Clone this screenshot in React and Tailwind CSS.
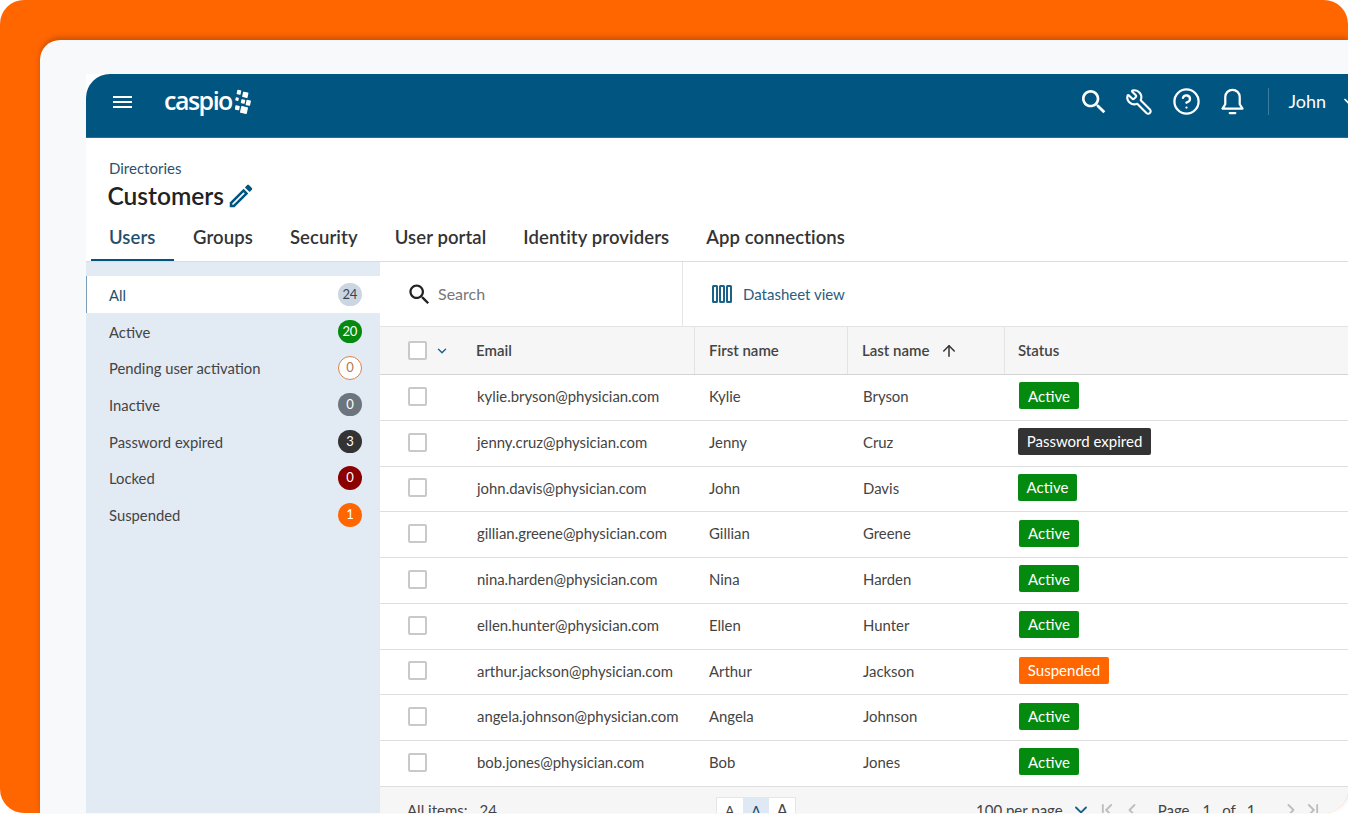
import { ArrowUp, ChevronDown, ChevronFirst, ChevronLast, ChevronLeft, ChevronRight, CircleHelp, Wrench } from 'lucide-react';

const filters = [
  { label: 'All', count: 24, badge: 'bg-[#ccd6e2] text-[#33475b]' },
  { label: 'Active', count: 20, badge: 'bg-[#048a0e] text-white' },
  { label: 'Pending user activation', count: 0, badge: 'border border-[#d9824a] bg-white text-[#b5774e]' },
  { label: 'Inactive', count: 0, badge: 'bg-[#6c757d] text-white' },
  { label: 'Password expired', count: 3, badge: 'bg-[#333333] text-white' },
  { label: 'Locked', count: 0, badge: 'bg-[#8b0000] text-white' },
  { label: 'Suspended', count: 1, badge: 'bg-[#ff6600] text-white' },
];

const users = [
  { email: 'kylie.bryson@physician.com', first: 'Kylie', last: 'Bryson', status: 'Active', badge: 'ml-px w-[60px] bg-[#048a0e]' },
  { email: 'jenny.cruz@physician.com', first: 'Jenny', last: 'Cruz', status: 'Password expired', badge: 'w-[133px] bg-[#333333]' },
  { email: 'john.davis@physician.com', first: 'John', last: 'Davis', status: 'Active', badge: 'w-[59px] bg-[#048a0e]' },
  { email: 'gillian.greene@physician.com', first: 'Gillian', last: 'Greene', status: 'Active', badge: 'ml-px w-[60px] bg-[#048a0e]' },
  { email: 'nina.harden@physician.com', first: 'Nina', last: 'Harden', status: 'Active', badge: 'ml-px w-[60px] bg-[#048a0e]' },
  { email: 'ellen.hunter@physician.com', first: 'Ellen', last: 'Hunter', status: 'Active', badge: 'ml-px w-[60px] bg-[#048a0e]' },
  { email: 'arthur.jackson@physician.com', first: 'Arthur', last: 'Jackson', status: 'Suspended', badge: 'ml-px w-[90px] bg-[#ff6600]' },
  { email: 'angela.johnson@physician.com', first: 'Angela', last: 'Johnson', status: 'Active', badge: 'ml-px w-[60px] bg-[#048a0e]' },
  { email: 'bob.jones@physician.com', first: 'Bob', last: 'Jones', status: 'Active', badge: 'ml-px w-[60px] bg-[#048a0e]' },
];

const tabs = ['Groups', 'Security', 'User portal', 'Identity providers', 'App connections'];

function SearchIcon({ size, className }) {
  return (
    <svg width={size} height={size} viewBox="0 0 24 24" fill="currentColor" className={className}>
      <path d="M15.5 14h-.79l-.28-.27C15.41 12.59 16 11.11 16 9.5 16 5.91 13.09 3 9.5 3S3 5.91 3 9.5 5.91 16 9.5 16c1.61 0 3.09-.59 4.23-1.57l.27.28v.79l5 4.99L20.49 19l-4.99-5zm-6 0C7.01 14 5 11.99 5 9.5S7.01 5 9.5 5 14 7.01 14 9.5 11.99 14 9.5 14z" />
    </svg>
  );
}

function Checkbox() {
  return <span className="block h-[19px] w-[19px] rounded-[2px] border-2 border-[#c9c9c9] bg-white" />;
}

function CaspioMark() {
  return (
    <svg width="16" height="26" viewBox="0 0 16 26" fill="#fff" className="ml-[3px]">
      <rect x="2" y="1" width="4" height="4.5" rx="0.7" transform="rotate(12 4 3)" />
      <rect x="7.5" y="3" width="5.5" height="5.5" rx="0.7" transform="rotate(12 10 6)" />
      <rect x="0.5" y="8.5" width="3.2" height="3.2" rx="0.6" transform="rotate(12 2 10)" />
      <rect x="6" y="10.5" width="4" height="4" rx="0.7" transform="rotate(12 8 12.5)" />
      <rect x="11" y="11" width="4.5" height="5.5" rx="0.7" transform="rotate(12 13 14)" />
      <rect x="0" y="16.5" width="4.5" height="4.5" rx="0.7" transform="rotate(12 2 19)" />
      <rect x="5.5" y="17.5" width="7" height="7" rx="0.8" transform="rotate(12 9 21)" />
    </svg>
  );
}

function Header() {
  return (
    <header className="flex h-[64px] shrink-0 items-center rounded-tl-[24px] border-b border-[#2a6f90] bg-[#005581] pb-[8px] text-white">
      <svg width="19" height="12" viewBox="0 0 19 12" fill="#fff" className="ml-[27px]">
        <rect y="0" width="19" height="2" />
        <rect y="5" width="19" height="2" />
        <rect y="10" width="19" height="2" />
      </svg>
      <div className="ml-[32px] flex items-center">
        <span className="pb-[2px] font-['Open_Sans',sans-serif] text-[25px] font-semibold leading-none tracking-[-1.5px]">caspio</span>
        <CaspioMark />
      </div>
      <div className="-mr-[12px] ml-auto flex items-center">
        <SearchIcon size={32} className="-mr-[3px]" />
        <Wrench size={28} strokeWidth={1.8} className="ml-[18px] -scale-x-100" />
        <CircleHelp size={29} strokeWidth={1.9} className="ml-[19px]" />
        <svg width="27" height="30" viewBox="0 0 24 27" fill="none" stroke="currentColor" strokeWidth="2" strokeLinejoin="round" strokeLinecap="round" className="ml-[18px]">
          <path d="M12 2.5a6.5 6.5 0 0 0-6.5 6.5v6.5L3 19.5h18l-2.5-4V9A6.5 6.5 0 0 0 12 2.5z" />
          <path d="M9.5 23.5h5" />
        </svg>
        <span className="ml-[22px] h-[27px] w-px bg-[#3d7ea0]" />
        <span className="ml-[19px] text-[18px]">John</span>
        <ChevronDown size={20} className="ml-[14px] w-[20px] shrink-0" />
      </div>
    </header>
  );
}

function TitleArea() {
  return (
    <div className="h-[124px] shrink-0 border-b border-[#dcdcdc] bg-white">
      <div className="pl-[23px] pt-[21px] text-[15px] leading-[18px] text-[#2f5069]">Directories</div>
      <div className="flex items-center pl-[21.5px] pt-[4px]">
        <span className="text-[24.5px] font-semibold leading-[30px] text-[#222222]">Customers</span>
        <svg width="30" height="30" viewBox="0 0 24 24" fill="#005581" className="ml-[2px]">
          <path d="M3 17.25V21h3.75L17.81 9.94l-3.75-3.75L3 17.25zM5.92 19H5v-.92l9.06-9.06.92.92L5.92 19zM20.71 5.63l-2.34-2.34c-.39-.39-1.02-.39-1.41 0l-1.83 1.83 3.75 3.75 1.83-1.83c.39-.39.39-1.02 0-1.41z" />
        </svg>
      </div>
      <div className="mt-[6px] flex items-start text-[18.5px] font-semibold leading-[40px] tracking-[0.1px] text-[#333333]">
        <span className="ml-[5px] w-[83px] border-b-2 border-[#005581] pb-[2px] pl-[18px] text-[#1f4f6d]">Users</span>
        <div className="ml-[19px] flex gap-[37px]">
          {tabs.map((tab) => (
            <span key={tab}>{tab}</span>
          ))}
        </div>
      </div>
    </div>
  );
}

function Sidebar() {
  return (
    <aside className="w-[294px] shrink-0 bg-[#e2eaf4] pt-[14px]">
      {filters.map((f, i) => (
        <div
          key={f.label}
          className={i === 0
            ? 'flex h-[37px] items-center border-l border-[#7b9db5] bg-white pl-[22px] pr-[18.5px] text-[14.8px] text-[#1f4f6d]'
            : 'flex h-[36.7px] items-center pl-[23px] pr-[18.5px] text-[14.8px] text-[#444444]'}
        >
          <span className="pt-[0.5px]">{f.label}</span>
          <span className={`ml-auto flex h-[23.5px] w-[23.5px] items-center justify-center rounded-full text-[13px] tracking-tight ${f.badge}`}>{f.count}</span>
        </div>
      ))}
    </aside>
  );
}

function Toolbar() {
  return (
    <div className="flex h-[64px] shrink-0 items-center bg-white">
      <div className="flex h-full w-[303px] items-center border-r border-[#e6e6e6] pl-[26px]">
        <SearchIcon size={27} className="text-[#222222]" />
        <span className="ml-[5px] text-[16px] text-[#777777]">Search</span>
      </div>
      <svg width="20" height="18" viewBox="0 0 20 18" fill="none" stroke="#1a6288" strokeWidth="2" className="ml-[29px]">
        <rect x="1" y="1" width="4" height="16" rx="0.5" />
        <rect x="8" y="1" width="4" height="16" rx="0.5" />
        <rect x="15" y="1" width="4" height="16" rx="0.5" />
      </svg>
      <span className="ml-[11px] text-[15px] text-[#2b5d7d]">Datasheet view</span>
    </div>
  );
}

function TableHead() {
  return (
    <div className="flex h-[49px] shrink-0 items-center border-y border-[#e3e3e3] border-b-[#d4d4d4] bg-[#f6f6f6] text-[15px] font-semibold text-[#444444]">
      <div className="flex w-[314px] items-center pl-[28px]">
        <Checkbox />
        <ChevronDown size={14} strokeWidth={2.4} className="ml-[8px] text-[#1a6288]" />
        <span className="ml-[27px]">Email</span>
      </div>
      <div className="flex h-full w-[153px] items-center border-l border-[#e3e3e3] pl-[14px]">First name</div>
      <div className="flex h-full w-[157px] items-center border-l border-[#e3e3e3] pl-[14px]">
        Last name
        <ArrowUp size={18} strokeWidth={2} className="ml-[11px] text-[#333333]" />
      </div>
      <div className="flex h-full flex-1 items-center border-l border-[#e3e3e3] pl-[13px]">Status</div>
    </div>
  );
}

function UserRow({ user }) {
  return (
    <div className="flex h-[45.75px] shrink-0 items-center border-b border-[#dedede] bg-white pb-[2px] text-[14.9px] text-[#444444]">
      <div className="w-[97px] shrink-0 pl-[28px]">
        <Checkbox />
      </div>
      <div className="w-[232px] shrink-0">{user.email}</div>
      <div className="w-[154px] shrink-0">{user.first}</div>
      <div className="w-[155px] shrink-0">{user.last}</div>
      <div className={`mb-[1px] flex h-[27px] items-center justify-center rounded-[2px] text-[15px] text-white ${user.badge}`}>{user.status}</div>
    </div>
  );
}

function Footer() {
  return (
    <div className="flex h-[40px] shrink-0 items-start bg-[#f6f6f6] pl-[27px] text-[15px] text-[#444444]">
      <div className="flex w-[309px] gap-[12px] pt-[13px] leading-[20px]">
        <span>All items:</span>
        <span>24</span>
      </div>
      <div className="mt-[10px] flex h-[30px] w-[80px] border border-[#e6e6e6] bg-white leading-[26px]">
        <span className="w-[26px] text-center text-[14px]">A</span>
        <span className="w-[27px] bg-[#dfe9f3] text-center text-[15px] text-[#1f4f6d]">A</span>
        <span className="w-[26px] text-center text-[17px]">A</span>
      </div>
      <div className="ml-[180px] flex items-center pt-[13px] leading-[20px]">
        <span>100 per page</span>
        <ChevronDown size={20} strokeWidth={2.2} className="ml-[8px] text-[#1a6288]" />
        <ChevronFirst size={20} strokeWidth={2.2} className="ml-[6px] text-[#bdbdbd]" />
        <ChevronLeft size={20} strokeWidth={2.2} className="ml-[5px] text-[#bdbdbd]" />
        <span className="ml-[16px]">Page</span>
        <span className="ml-[13px]">1</span>
        <span className="ml-[11px]">of</span>
        <span className="ml-[11px]">1</span>
        <ChevronRight size={20} strokeWidth={2.2} className="ml-[25px] text-[#bdbdbd]" />
        <ChevronLast size={20} strokeWidth={2.2} className="ml-[2px] text-[#bdbdbd]" />
      </div>
    </div>
  );
}

export default function App() {
  return (
    <div className="h-[814px] w-[1348px] overflow-hidden bg-white font-['Lato',sans-serif]">
      <div className="h-[813px] rounded-[24px] bg-[#ff6600] pl-[40px] pt-[40px]">
        <div className="h-[772.6px] overflow-hidden rounded-tl-[20px] rounded-br-[24px] bg-[#f8f9fb] pl-[46px] pt-[34px] shadow-[0_-3px_5px_rgba(150,60,0,0.45)]">
          <div className="flex h-[740px] flex-col bg-white">
            <Header />
            <TitleArea />
            <div className="flex min-h-0 flex-1">
              <Sidebar />
              <main className="flex min-w-0 flex-1 flex-col overflow-hidden">
                <Toolbar />
                <TableHead />
                {users.map((u) => (
                  <UserRow key={u.email} user={u} />
                ))}
                <Footer />
              </main>
            </div>
          </div>
        </div>
      </div>
    </div>
  );
}
